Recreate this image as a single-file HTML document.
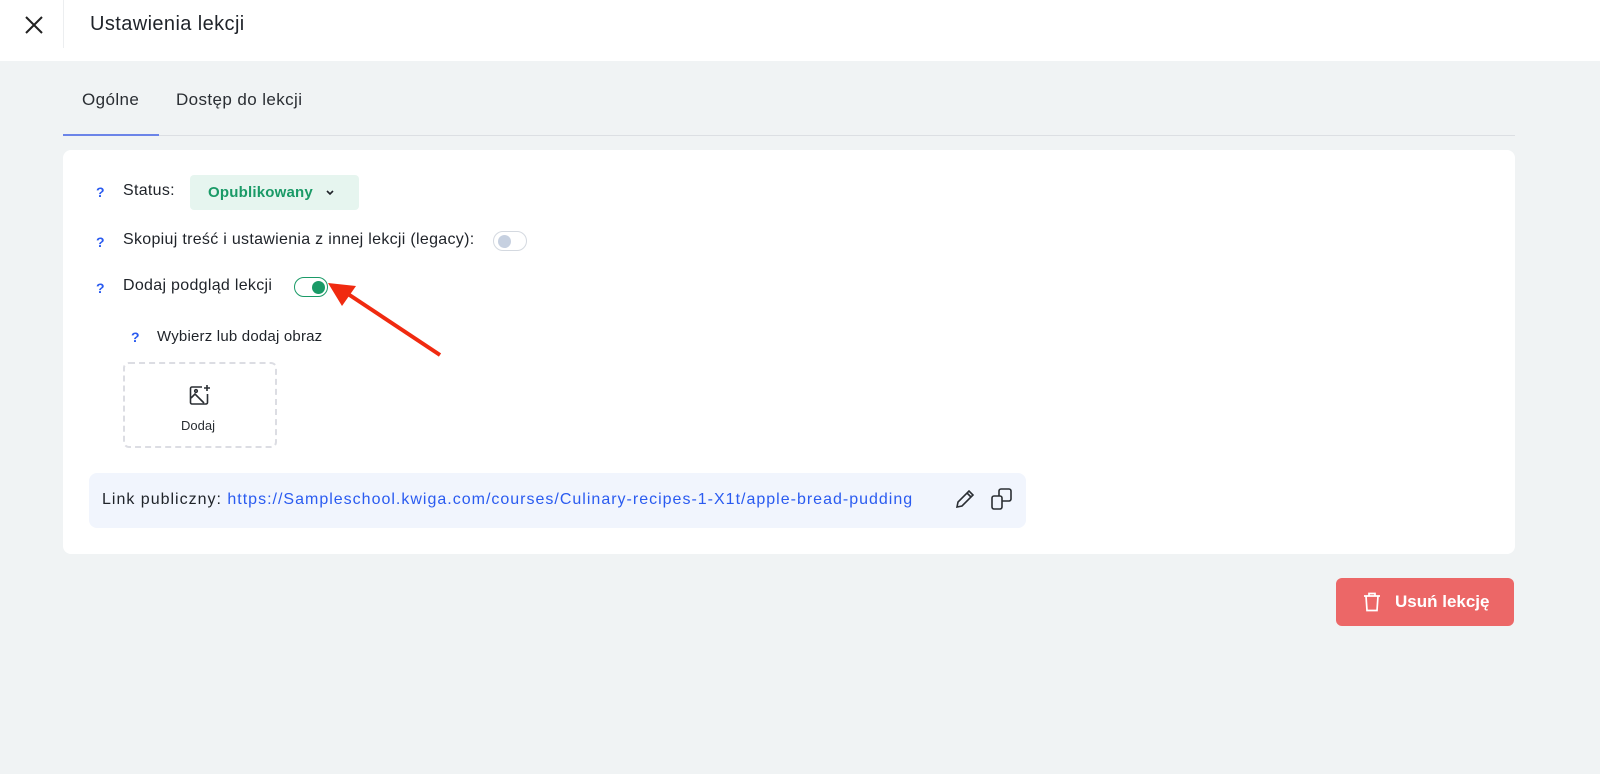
<!DOCTYPE html>
<html><head><meta charset="utf-8"><style>
*{box-sizing:border-box;margin:0;padding:0}
body{width:1600px;height:774px;background:#f0f3f4;font-family:"Liberation Sans",sans-serif;color:#1f2329;position:relative;overflow:hidden}
.top{position:absolute;left:0;top:0;width:1600px;height:61px;background:#fff}
.sep{position:absolute;left:63px;top:0;width:1px;height:48px;background:#eceef0}
.title{position:absolute;left:90px;top:13px;font-size:20px;letter-spacing:0.4px;color:#1f2329}
.tab{position:absolute;top:90px;font-size:17px;letter-spacing:0.4px;color:#2a2e33}
.tabline{position:absolute;left:63px;top:135px;width:1452px;height:1px;background:#dcdfe3}
.tabact{position:absolute;left:63px;top:134px;width:96px;height:2px;background:#6b84e8}
.card{position:absolute;left:63px;top:150px;width:1452px;height:404px;background:#fff;border-radius:8px}
.q{position:absolute;color:#2a5bf0;font-size:14px;font-weight:bold}
.lbl{position:absolute;font-size:16px;letter-spacing:0.3px;color:#1f2329}
.status{position:absolute;left:190px;top:175px;width:169px;height:35px;background:#e6f5ef;border-radius:4px;color:#1a9a67;font-weight:bold;font-size:15px;padding:9px 0 0 18px;letter-spacing:0.2px}
.tg{position:absolute;width:34px;height:20px;border-radius:10px;border:1px solid #d4d9e0;background:#fff}
.tg i{position:absolute;top:3px;width:12px;height:12px;border-radius:50%}
.drop{position:absolute;left:123px;top:362px;width:154px;height:86px;border:2px dashed #dcdde3;border-radius:6px}
.link{position:absolute;left:89px;top:473px;width:937px;height:55px;background:#f1f5fd;border-radius:8px}
.btn{position:absolute;left:1336px;top:578px;width:178px;height:48px;background:#ec6767;border-radius:6px;color:#fff;font-weight:bold;font-size:17px}
</style></head><body>
<div class="top">
<svg style="position:absolute;left:24px;top:15px" width="20" height="20" viewBox="0 0 20 20"><path d="M2 2L18 18M18 2L2 18" stroke="#222" stroke-width="2"/></svg>
<div class="sep"></div>
<div class="title">Ustawienia lekcji</div>
</div>
<div class="tab" style="left:82px">Ogólne</div>
<div class="tab" style="left:176px">Dostęp do lekcji</div>
<div class="tabline"></div><div class="tabact"></div>
<div class="card"></div>
<div class="q" style="left:96px;top:184px">?</div>
<div class="lbl" style="left:123px;top:182px">Status:</div>
<div class="status">Opublikowany <svg width="10" height="8" viewBox="0 0 10 8" style="margin-left:8px"><path d="M2 2L5 5L8 2" stroke="#1f2329" stroke-width="1.6" fill="none"/></svg></div>
<div class="q" style="left:96px;top:234px">?</div>
<div class="lbl" style="left:123px;top:231px">Skopiuj treść i ustawienia z innej lekcji (legacy):</div>
<div class="tg" style="left:493px;top:231px"><i style="left:4px;background:#c6d0e0;width:13px;height:13px"></i></div>
<div class="q" style="left:96px;top:280px">?</div>
<div class="lbl" style="left:123px;top:277px">Dodaj podgląd lekcji</div>
<div class="tg" style="left:294px;top:277px;border-color:#1a9a67"><i style="left:17px;background:#1a9a67;width:13px;height:13px"></i></div>
<svg style="position:absolute;left:320px;top:280px" width="130" height="80" viewBox="0 0 130 80"><path d="M120 75L25 12" stroke="#f02a10" stroke-width="4"/><path d="M8 3L36 6L22 26Z" fill="#f02a10"/></svg>
<div class="q" style="left:131px;top:329px">?</div>
<div class="lbl" style="left:157px;top:328px;font-size:15px;letter-spacing:0.2px">Wybierz lub dodaj obraz</div>
<div class="drop">
<svg style="position:absolute;left:63px;top:20px" width="24" height="24" viewBox="0 0 24 24" fill="none" stroke="#2a2e33" stroke-width="1.6"><path d="M14 3H4a1.5 1.5 0 0 0-1.5 1.5v14A1.5 1.5 0 0 0 4 20h14a1.5 1.5 0 0 0 1.5-1.5V10"/><path d="M3 14l4-4 9 9"/><circle cx="8" cy="7" r="1.3"/><path d="M19 1v6M16 4h6"/></svg>
<div style="position:absolute;left:56px;top:54px;font-size:13px;color:#2a2e33">Dodaj</div>
</div>
<div class="link">
<div style="position:absolute;left:13px;top:18px;font-size:16px;letter-spacing:1px;white-space:nowrap">Link publiczny: <span style="color:#2a5bf0">https://Sampleschool.kwiga.com/courses/Culinary-recipes-1-X1t/apple-bread-pudding</span></div>
<svg style="position:absolute;left:865px;top:15px" width="22" height="22" viewBox="0 0 22 22" fill="none" stroke="#2a2e33" stroke-width="1.6"><path d="M3 19l1-5L15 3l4 4L8 18z M13 5l4 4"/></svg>
<svg style="position:absolute;left:901px;top:14px" width="24" height="24" viewBox="0 0 24 24" fill="none" stroke="#2a2e33" stroke-width="1.6"><rect x="2" y="9" width="10" height="13" rx="2"/><path d="M9 9V4a2 2 0 0 1 2-2h8a2 2 0 0 1 2 2v8a2 2 0 0 1-2 2h-7"/></svg>
</div>
<div class="btn">
<svg style="position:absolute;left:27px;top:14px" width="18" height="20" viewBox="0 0 18 20" fill="none" stroke="#fff" stroke-width="1.7"><path d="M1 4h16M6 4V1.5h6V4M3 4l1 14.5h10L15 4"/></svg>
<div style="position:absolute;left:59px;top:14px">Usuń lekcję</div>
</div>
</body></html>
